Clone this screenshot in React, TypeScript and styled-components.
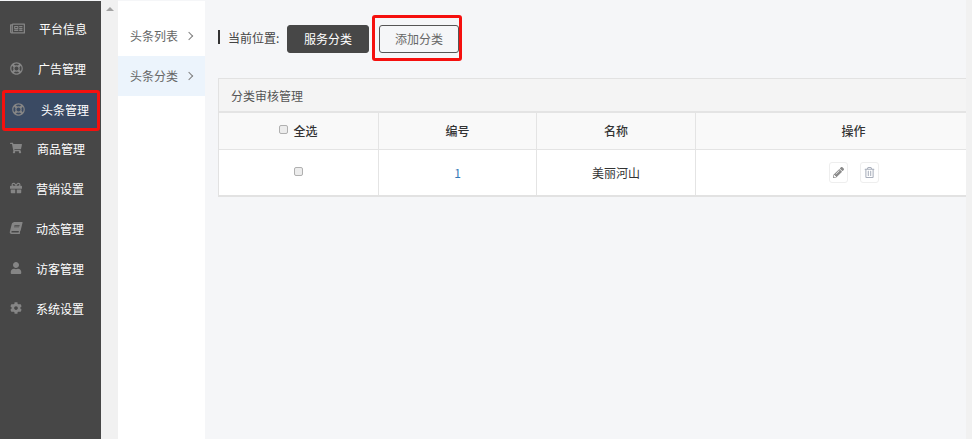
import styled, { createGlobalStyle } from "styled-components";
import {
  FaRegNewspaper,
  FaRegLifeRing,
  FaShoppingCart,
  FaGift,
  FaBook,
  FaUser,
  FaCog,
  FaPencilAlt,
  FaRegTrashAlt,
} from "react-icons/fa";
import type { ReactNode } from "react";

const Global = createGlobalStyle`
  html, body {
    margin: 0;
    padding: 0;
    background: #f5f6f8;
    overflow: hidden;
  }
  body {
    font-family: "Noto Sans CJK SC", "Liberation Sans", sans-serif;
    font-size: 12px;
    color: #333;
  }
`;

const Page = styled.div`
  display: flex;
  width: 972px;
  height: 439px;
  overflow: hidden;
`;

const Sidebar = styled.div`
  width: 101px;
  flex: none;
  background: #474747;
  margin-top: 1px;
  padding-top: 7px;
  box-sizing: border-box;
`;

const MenuItem = styled.div<{ $active?: boolean; $iconLeft: number }>`
  height: ${(p) => (p.$active ? "41px" : "40px")};
  margin: ${(p) => (p.$active ? "2px 1px -3px 2px" : "0")};
  box-sizing: border-box;
  display: flex;
  align-items: center;
  color: #fff;
  font-size: 12px;
  background: ${(p) => (p.$active ? "#3a4a63" : "transparent")};
  border: ${(p) => (p.$active ? "3px solid #f5100e" : "none")};
  border-radius: ${(p) => (p.$active ? "3px" : "0")};
  padding-left: ${(p) => p.$iconLeft - (p.$active ? 5 : 0)}px;
  padding-bottom: ${(p) => (p.$active ? "3px" : "0")};
`;

const IconSlot = styled.span<{ $width: number; $size: number }>`
  width: ${(p) => p.$width}px;
  flex: none;
  display: flex;
  align-items: center;
  color: #858585;

  svg {
    width: ${(p) => p.$size}px;
    height: ${(p) => p.$size}px;
  }
`;

const BookIcon = styled(FaBook)`
  transform: skewX(-14deg);
`;

const ScrollGutter = styled.div`
  width: 17px;
  flex: none;
  background: #f1f1f1;
  padding: 7px 0 0 5px;
  box-sizing: border-box;
`;

const ArrowUp = styled.div`
  width: 0;
  height: 0;
  border-left: 4px solid transparent;
  border-right: 4px solid transparent;
  border-bottom: 4px solid #a3a3a3;
`;

const SubNav = styled.div`
  width: 87px;
  flex: none;
  background: #fff;
  margin-top: 1px;
  padding-top: 15px;
  box-sizing: border-box;
`;

const SubItem = styled.div<{ $active?: boolean }>`
  height: 40px;
  box-sizing: border-box;
  display: flex;
  align-items: center;
  justify-content: space-between;
  padding: 0 13px 2px 12px;
  color: #666;
  background: ${(p) => (p.$active ? "#ecf4fc" : "transparent")};
`;

const Chevron = styled.span`
  width: 5px;
  height: 5px;
  margin-top: 2px;
  border-top: 1px solid #808080;
  border-right: 1px solid #808080;
  transform: rotate(45deg);
`;

const Main = styled.div`
  flex: 1;
  min-width: 0;
  padding: 15px 0 0 13px;
  box-sizing: border-box;
  display: flex;
  flex-direction: column;
  overflow: hidden;
`;

const Crumbs = styled.div`
  display: flex;
  align-items: center;
  height: 46px;
`;

const Mark = styled.span`
  width: 2px;
  height: 14px;
  background: #333;
  margin: 0 8px 0 0;
  position: relative;
  top: -1px;
`;

const CrumbLabel = styled.span`
  width: 59px;
  color: #444;
  position: relative;
  top: -1px;
`;

const Tag = styled.div<{ $outline?: boolean }>`
  width: ${(p) => (p.$outline ? "81px" : "82px")};
  height: 28px;
  margin-top: 2px;
  padding-bottom: 2px;
  box-sizing: border-box;
  display: flex;
  align-items: center;
  justify-content: center;
  border-radius: 3px;
  color: ${(p) => (p.$outline ? "#666" : "#fff")};
  background: ${(p) => (p.$outline ? "transparent" : "#474747")};
  border: 1px solid ${(p) => (p.$outline ? "#555" : "#474747")};
`;

const Highlight = styled.div`
  width: 90px;
  height: 46px;
  box-sizing: border-box;
  margin-left: 3px;
  border: 3px solid #f5100e;
  border-radius: 3px;
  display: flex;
  align-items: center;
  padding-left: 4px;
`;

const Panel = styled.div`
  width: 794px;
  flex: none;
  margin-top: 17px;
  border: 1px solid #e2e2e2;
  border-width: 1px 0 2px 1px;
  box-sizing: border-box;
`;

const PanelHead = styled.div`
  height: 32px;
  display: flex;
  align-items: center;
  padding-left: 12px;
  color: #555;
  background: #f4f4f4;
  border-bottom: 2px solid #e4e4e4;
`;

const Table = styled.div`
  display: grid;
  grid-template-columns: 160px 158px 159px 316px;
  background: #fff;
`;

const HeadCell = styled.div`
  height: 37px;
  box-sizing: border-box;
  padding-bottom: 2px;
  display: flex;
  align-items: center;
  justify-content: center;
  gap: 5px;
  font-weight: 500;
  color: #333;
  background: #f9f9f9;
  border-bottom: 1px solid #e4e4e4;
  border-right: 1px solid #e4e4e4;
  &:last-child {
    border-right: 0;
  }
`;

const BodyCell = styled.div<{ $blue?: boolean }>`
  height: 45px;
  box-sizing: border-box;
  padding-bottom: 1px;
  display: flex;
  align-items: center;
  justify-content: center;
  gap: 12px;
  color: ${(p) => (p.$blue ? "#337ab7" : "#333")};
  border-right: 1px solid #e4e4e4;
  &:last-child {
    border-right: 0;
  }
`;

const Check = styled.span`
  width: 7px;
  height: 7px;
  border: 1px solid #b0b0b0;
  border-radius: 2px;
  background: #ececec;
  position: relative;
  top: -1px;
`;

const IconButton = styled.span`
  width: 19px;
  height: 21px;
  box-sizing: border-box;
  display: flex;
  align-items: center;
  justify-content: center;
  border: 1px solid #eee;
  border-radius: 3px;
  background: #fff;
  svg {
    width: 11px;
    height: 11px;
  }
`;

const RightBar = styled.div`
  width: 6px;
  flex: none;
  background: #f1f1f1;
`;

type Menu = { label: string; icon: ReactNode; textLeft: number; iconLeft: number; size: number; active?: boolean };

const menus: Menu[] = [
  { label: "平台信息", icon: <FaRegNewspaper />, textLeft: 39, iconLeft: 10, size: 15 },
  { label: "广告管理", icon: <FaRegLifeRing />, textLeft: 38, iconLeft: 10, size: 13 },
  { label: "头条管理", icon: <FaRegLifeRing />, textLeft: 41, iconLeft: 12, size: 13, active: true },
  { label: "商品管理", icon: <FaShoppingCart />, textLeft: 37, iconLeft: 10, size: 12 },
  { label: "营销设置", icon: <FaGift />, textLeft: 36, iconLeft: 10, size: 12 },
  { label: "动态管理", icon: <BookIcon />, textLeft: 36, iconLeft: 10, size: 12 },
  { label: "访客管理", icon: <FaUser />, textLeft: 36, iconLeft: 10, size: 12 },
  { label: "系统设置", icon: <FaCog />, textLeft: 36, iconLeft: 10, size: 12 },
];

export default function App() {
  return (
    <Page>
      <Global />
      <Sidebar>
        {menus.map((m) => (
          <MenuItem key={m.label} $active={m.active} $iconLeft={m.iconLeft}>
            <IconSlot $width={m.textLeft - m.iconLeft} $size={m.size}>
              {m.icon}
            </IconSlot>
            {m.label}
          </MenuItem>
        ))}
      </Sidebar>
      <ScrollGutter>
        <ArrowUp />
      </ScrollGutter>
      <SubNav>
        <SubItem>
          头条列表
          <Chevron />
        </SubItem>
        <SubItem $active>
          头条分类
          <Chevron />
        </SubItem>
      </SubNav>
      <Main>
        <Crumbs>
          <Mark />
          <CrumbLabel>当前位置:</CrumbLabel>
          <Tag>服务分类</Tag>
          <Highlight>
            <Tag $outline>添加分类</Tag>
          </Highlight>
        </Crumbs>
        <Panel>
          <PanelHead>分类审核管理</PanelHead>
          <Table>
            <HeadCell>
              <Check />
              全选
            </HeadCell>
            <HeadCell>编号</HeadCell>
            <HeadCell>名称</HeadCell>
            <HeadCell>操作</HeadCell>
            <BodyCell>
              <Check />
            </BodyCell>
            <BodyCell $blue>1</BodyCell>
            <BodyCell>美丽河山</BodyCell>
            <BodyCell>
              <IconButton>
                <FaPencilAlt color="#8a8a8a" />
              </IconButton>
              <IconButton>
                <FaRegTrashAlt color="#a8aebb" />
              </IconButton>
            </BodyCell>
          </Table>
        </Panel>
      </Main>
      <RightBar />
    </Page>
  );
}
